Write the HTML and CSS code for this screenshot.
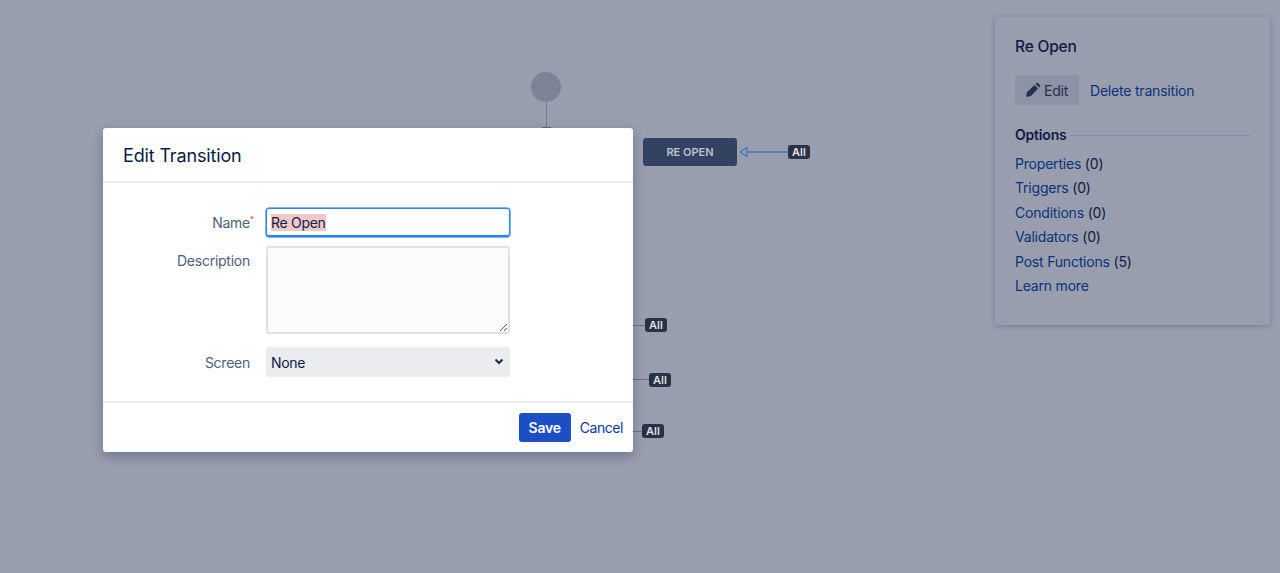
FILE: index.html
```html
<!DOCTYPE html>
<html lang="en">
<head>
    <meta charset="UTF-8">
    <meta name="viewport" content="width=device-width, initial-scale=1.0">
    <title>Edit Transition</title>
    <link rel="stylesheet" href="styles.css">
</head>
<body>
    <!-- Workflow diagram -->
    <div class="diagram">
        <div class="start-node"></div>
        <div class="start-line"></div>
        <div class="start-head"></div>
        <div class="status-node">RE OPEN</div>
        <svg class="arrow" width="50" height="12" viewBox="0 0 50 12">
            <path d="M8 6H50" stroke="#1f66cc" stroke-width="1" fill="none"/>
            <path d="M1 6L8 1.5V10.5Z" stroke="#1f66cc" stroke-width="1" fill="none"/>
        </svg>
        <div class="all-tag tag-reopen">All</div>
        <div class="stub stub-one"></div>
        <div class="all-tag tag-one">All</div>
        <div class="stub stub-two"></div>
        <div class="all-tag tag-two">All</div>
        <div class="stub stub-three"></div>
        <div class="all-tag tag-three">All</div>
    </div>

    <!-- Transition side panel -->
    <aside class="side-panel">
        <h2 class="panel-title">Re Open</h2>
        <div class="panel-actions">
            <button class="edit-btn" type="button">
                <svg width="16" height="16" viewBox="0 0 16 16">
                    <path d="M1 15l1-5 7.500-7 3.500 3.500-7 7.500zM10.500 2l1-1c.4-.4 1-.4 1.400 0l2.100 2.100c.4.4.4 1 0 1.400l-1 1z" fill="#344563"/>
                </svg>
                Edit
            </button>
            <a class="link" href="#">Delete transition</a>
        </div>
        <div class="options-head">
            <h3>Options</h3>
            <span class="options-rule"></span>
        </div>
        <ul class="options-list">
            <li><a class="link" href="#">Properties</a> (0)</li>
            <li><a class="link" href="#">Triggers</a> (0)</li>
            <li><a class="link" href="#">Conditions</a> (0)</li>
            <li><a class="link" href="#">Validators</a> (0)</li>
            <li><a class="link" href="#">Post Functions</a> (5)</li>
            <li><a class="link" href="#">Learn more</a></li>
        </ul>
    </aside>

    <div class="backdrop"></div>

    <!-- Edit dialog -->
    <div class="dialog">
        <div class="dialog-header">
            <h1>Edit Transition</h1>
        </div>
        <form class="dialog-body">
            <div class="field">
                <label for="name">Name<span class="req">*</span></label>
                <div class="name-input" id="name"><span class="selected">Re Open</span></div>
            </div>
            <div class="field field-desc">
                <label for="desc">Description</label>
                <textarea id="desc"></textarea>
            </div>
            <div class="field field-screen">
                <label for="screen">Screen</label>
                <div class="select-wrap">
                    <select id="screen">
                        <option>None</option>
                    </select>
                    <svg class="chevron" width="10" height="7" viewBox="0 0 10 7">
                        <path d="M1.500 1.500L5 5l3.500-3.500" stroke="#172b4d" stroke-width="2" fill="none"/>
                    </svg>
                </div>
            </div>
        </form>
        <div class="dialog-footer">
            <button class="save-btn" type="button">Save</button>
            <a class="link cancel" href="#">Cancel</a>
        </div>
    </div>
</body>
</html>
```

FILE: styles.css
```css
* {
    box-sizing: border-box;
}
html, body {
    height: 100%;
}
body {
    margin: 0;
    overflow: hidden;
    background-color: #fff;
    color: #0f2148;
    font-family: Inter, "Liberation Sans", sans-serif;
    font-size: 14px;
    letter-spacing: -0.2px;
}
h1, h2, h3, ul {
    margin: 0;
    padding: 0;
}
.link {
    color: #0747a6;
    text-decoration: none;
}

/* diagram */
.start-node {
    position: absolute;
    left: 531px;
    top: 72px;
    width: 30px;
    height: 30px;
    border-radius: 50%;
    background-color: #cfcfd3;
}
.start-line {
    position: absolute;
    left: 546px;
    top: 102px;
    width: 1px;
    height: 26px;
    background-color: #c4c4c8;
}
.start-head {
    position: absolute;
    left: 542px;
    top: 127px;
    width: 9px;
    height: 1px;
    background-color: #a0a0a8;
}
/* node and tags keep their own dimmed colours, so they sit above the backdrop */
.status-node {
    position: absolute;
    z-index: 1;
    left: 643px;
    top: 138px;
    width: 94px;
    height: 28px;
    border-radius: 3px;
    background-color: #344262;
    color: #bcc1cd;
    font-size: 11px;
    font-weight: 600;
    letter-spacing: 0;
    line-height: 28px;
    text-align: center;
}
.arrow {
    position: absolute;
    z-index: 1;
    left: 739px;
    top: 146px;
}
.all-tag {
    position: absolute;
    z-index: 1;
    width: 22px;
    height: 14px;
    border-radius: 3px;
    background-color: #2a3142;
    color: #dde0e6;
    font-size: 11px;
    font-weight: 600;
    letter-spacing: 0;
    line-height: 14px;
    text-align: center;
}
.tag-reopen { left: 788px; top: 145px; }
.tag-one { left: 645px; top: 318px; }
.tag-two { left: 649px; top: 373px; }
.tag-three { left: 642px; top: 424px; }
.stub {
    position: absolute;
    height: 1px;
    background-color: #b4b4ba;
}
.stub-one { left: 633px; top: 325px; width: 12px; }
.stub-two { left: 633px; top: 379px; width: 16px; }
.stub-three { left: 633px; top: 431px; width: 9px; }

/* side panel */
.side-panel {
    position: absolute;
    left: 995px;
    top: 17px;
    width: 275px;
    height: 308px;
    padding: 21px 20px 20px;
    border-radius: 3px;
    background-color: #fff;
    box-shadow: 0 1px 6px rgba(9, 30, 66, 0.25);
}
.panel-title {
    font-size: 15.500px;
    font-weight: 500;
    line-height: 18px;
}
.panel-actions {
    display: flex;
    align-items: center;
    gap: 11px;
    margin-top: 19px;
}
.edit-btn {
    display: flex;
    align-items: center;
    gap: 3px;
    width: 64px;
    height: 30px;
    padding: 0 0 0 10px;
    border: none;
    border-radius: 3px;
    background-color: #ebecf0;
    color: #344563;
    font: inherit;
    letter-spacing: inherit;
}
.options-head {
    display: flex;
    align-items: center;
    gap: 4px;
    margin-top: 21px;
}
.options-head h3 {
    font-size: 14px;
    font-weight: 600;
    line-height: 18px;
}
.options-rule {
    flex: 1;
    height: 1px;
    background-color: #dfe1e6;
}
.options-list {
    margin-top: 8px;
    list-style: none;
}
.options-list li {
    height: 24.400px;
    line-height: 24.400px;
}

/* overlay */
.backdrop {
    position: absolute;
    inset: 0;
    background-color: rgba(12, 23, 62, 0.42);
}

/* dialog */
.dialog {
    position: absolute;
    z-index: 2;
    left: 103px;
    top: 128px;
    width: 530px;
    height: 324px;
    display: flex;
    flex-direction: column;
    border-radius: 3px;
    background-color: #fff;
    box-shadow: 0 4px 12px rgba(9, 30, 66, 0.3);
}
.dialog-header {
    display: flex;
    align-items: center;
    height: 55px;
    padding: 2px 20px 0;
    border-bottom: 2px solid #ebecf0;
}
.dialog-header h1 {
    font-size: 18px;
    font-weight: 400;
    letter-spacing: -0.15px;
    color: #0a1a44;
}
.dialog-body {
    flex: 1;
    padding-top: 25px;
}
.field {
    display: flex;
    align-items: center;
    gap: 16px;
}
.field label {
    position: relative;
    width: 147px;
    color: #505f79;
    letter-spacing: -0.25px;
    text-align: right;
}
.req {
    position: absolute;
    top: 0;
    left: 100%;
    color: #de350b;
    font-size: 8px;
}
.name-input {
    width: 244px;
    height: 29px;
    padding: 1px 4px 0;
    border: 1px solid #2684ff;
    border-bottom-width: 2px;
    border-radius: 3px;
    box-shadow: 0 0 0 0.5px #0c66e4;
    letter-spacing: -0.3px;
    line-height: 26px;
}
.selected {
    display: inline-block;
    height: 17px;
    line-height: 17px;
    background-color: #eec9c9;
}
.field-desc {
    align-items: flex-start;
    margin-top: 9px;
}
.field-desc label {
    padding-top: 6px;
}
textarea {
    display: block;
    width: 244px;
    height: 88px;
    padding: 5px;
    border: 2px solid #dfe1e6;
    border-radius: 3px;
    background-color: #fafbfc;
}
.field-screen {
    margin-top: 13px;
}
.select-wrap {
    position: relative;
    width: 244px;
    height: 30px;
}
select {
    width: 100%;
    height: 100%;
    padding: 0 5px;
    border: none;
    border-radius: 3px;
    background-color: #ebecf0;
    color: #0f2148;
    font: inherit;
    letter-spacing: -0.3px;
    appearance: none;
}
.chevron {
    position: absolute;
    right: 6px;
    top: 11px;
}
.dialog-footer {
    display: flex;
    align-items: center;
    justify-content: flex-end;
    gap: 9px;
    height: 51px;
    padding: 0 10px 0 0;
    border-top: 2px solid #ebecf0;
}
.save-btn {
    width: 52px;
    height: 29px;
    padding: 0;
    border: none;
    border-radius: 3px;
    background-color: #1d4fc4;
    color: #fff;
    font: inherit;
    font-weight: 600;
    letter-spacing: inherit;
}
.cancel {
    color: #0a3ca5;
    letter-spacing: -0.45px;
}
```
